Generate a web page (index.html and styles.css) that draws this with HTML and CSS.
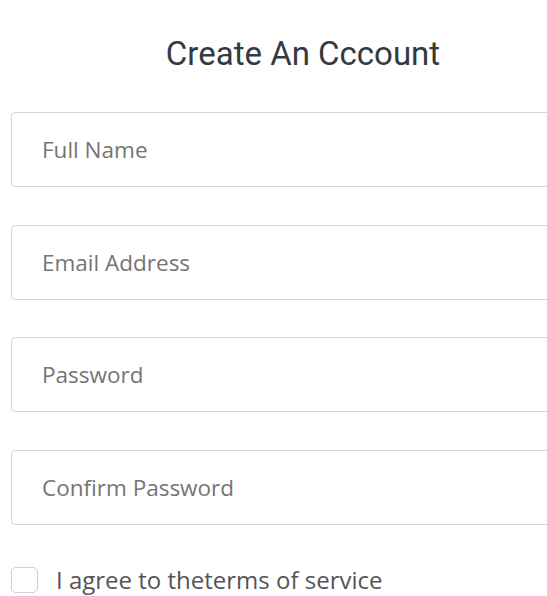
FILE: index.html
```html
<!DOCTYPE html>
<html lang="en">
<head>
<meta charset="utf-8">
<title>Create An Cccount</title>
<link rel="stylesheet" href="styles.css">
</head>
<body>
<form class="signup">
  <h1 class="signup-title">Create An Cccount</h1>
  <input class="field" type="text" placeholder="Full Name">
  <input class="field" type="email" placeholder="Email Address">
  <input class="field" type="password" placeholder="Password">
  <input class="field" type="password" placeholder="Confirm Password">
  <label class="agree">
    <input class="agree-box" type="checkbox">
    <span class="agree-text">I agree to theterms of service</span>
  </label>
</form>
</body>
</html>
```

FILE: styles.css
```css
html, body {
  margin: 0;
  padding: 0;
  overflow: hidden;
  background: #fff;
}

.signup {
  box-sizing: border-box;
  width: 595px;
  padding: 35px 0 0 11px;
  display: flex;
  flex-direction: column;
}

.signup-title {
  margin: 0 0 39px 0;
  font-family: Roboto, "Liberation Sans", sans-serif;
  font-weight: 400;
  font-size: 33px;
  line-height: 38px;
  color: #343a40;
  text-align: center;
}

.field {
  box-sizing: border-box;
  height: 75px;
  margin: 0 0 37.5px 0;
  padding: 0 30px;
  border: 1px solid #d6d6d6;
  border-radius: 4px;
  font-family: "Open Sans", "Liberation Sans", sans-serif;
  font-size: 22.5px;
  color: #495057;
  background: #fff;
  outline: none;
}

.field::placeholder {
  color: #757575;
  opacity: 1;
}

.agree {
  display: flex;
  align-items: center;
  gap: 18px;
  margin-top: 3px;
}

.agree-box {
  appearance: none;
  -webkit-appearance: none;
  box-sizing: border-box;
  width: 27px;
  height: 26px;
  margin: 0;
  border: 1px solid #cfcfcf;
  border-radius: 5px;
  background: #fff;
}

.agree-text {
  font-family: "Open Sans", "Liberation Sans", sans-serif;
  font-size: 24px;
  line-height: 30px;
  color: #555;
}
```
